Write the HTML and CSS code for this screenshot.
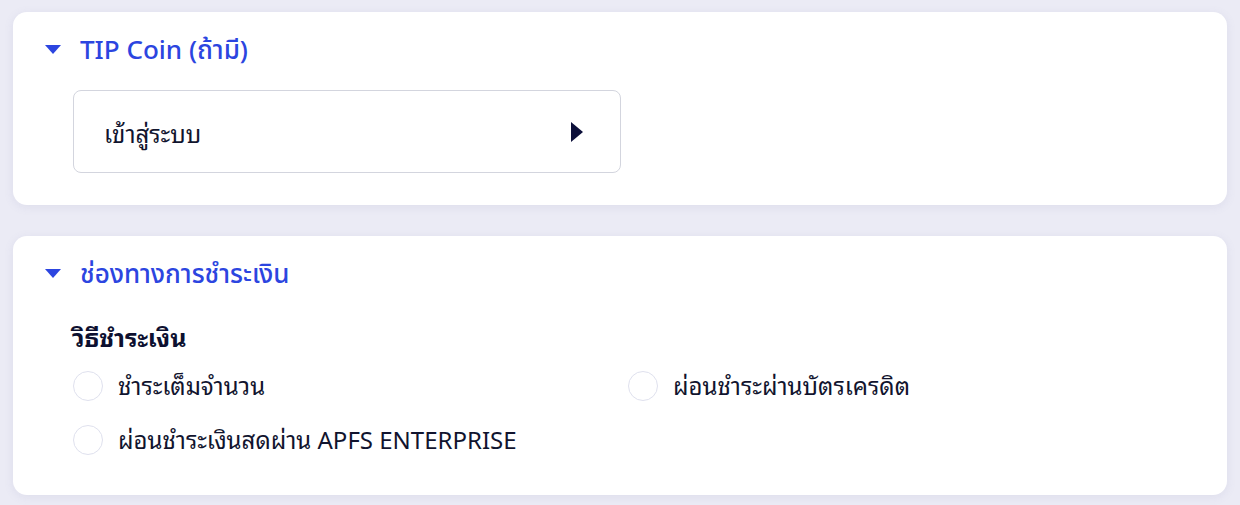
FILE: index.html
```html
<!DOCTYPE html>
<html lang="th">
<head>
<meta charset="utf-8">
<link rel="stylesheet" href="styles.css">
</head>
<body>
<main class="page">
  <section class="card card-coin">
    <header class="card-head">
      <span class="caret"></span>
      <h2 class="card-title">TIP Coin (ถ้ามี)</h2>
    </header>
    <div class="card-body">
      <button class="login-box" type="button">
        <span class="login-text">เข้าสู่ระบบ</span>
        <span class="play"></span>
      </button>
    </div>
  </section>

  <section class="card card-pay">
    <header class="card-head">
      <span class="caret"></span>
      <h2 class="card-title">ช่องทางการชำระเงิน</h2>
    </header>
    <div class="card-body pay-body">
      <h3 class="pay-label">วิธีชำระเงิน</h3>
      <div class="options">
        <label class="option"><span class="radio"></span><span class="opt-text">ชำระเต็มจำนวน</span></label>
        <label class="option"><span class="radio"></span><span class="opt-text">ผ่อนชำระผ่านบัตรเครดิต</span></label>
        <label class="option"><span class="radio"></span><span class="opt-text">ผ่อนชำระเงินสดผ่าน APFS ENTERPRISE</span></label>
      </div>
    </div>
  </section>
</main>
</body>
</html>
```

FILE: styles.css
```css
* { box-sizing: border-box; }
html, body { margin: 0; padding: 0; }
body {
  background: #ebebf5;
  font-family: "Noto Sans", "Noto Sans Thai Looped", "Noto Sans Thai", sans-serif;
  color: #11142e;
  width: 1240px;
  height: 505px;
  overflow: hidden;
}
.page {
  padding: 12px 13px 0 13px;
  display: flex;
  flex-direction: column;
  gap: 31px;
}
.card {
  background: #ffffff;
  border-radius: 14px;
  box-shadow: 0 2px 10px rgba(120, 120, 170, 0.12);
}
.card-coin { height: 193px; }
.card-pay { height: 259px; }
.card-head {
  display: flex;
  align-items: center;
  height: 74px;
  padding-left: 32px;
  gap: 19px;
}
.caret {
  width: 0; height: 0;
  border-left: 8.5px solid transparent;
  border-right: 8.5px solid transparent;
  border-top: 9px solid #2c45e0;
}
.card-title {
  margin: 0;
  font-family: "Noto Sans", "Noto Sans Thai", sans-serif;
  font-size: 26px;
  font-weight: 500;
  color: #2c45e0;
  line-height: 34px;
}
.card-body { padding-left: 60px; padding-right: 44px; }
.login-box {
  display: flex;
  align-items: center;
  justify-content: space-between;
  width: 548px;
  height: 83px;
  margin-top: 4px;
  padding: 0 37px 0 30px;
  background: #fff;
  border: 1px solid #d3d5de;
  border-radius: 8px;
  font: inherit;
  color: inherit;
  cursor: pointer;
}
.login-text { font-size: 24px; }
.play {
  width: 0; height: 0;
  border-top: 10.5px solid transparent;
  border-bottom: 10.5px solid transparent;
  border-left: 12px solid #0c0f3a;
}
.pay-body { padding-left: 59px; }
.pay-label {
  margin: 12px 0 0 0;
  font-size: 25px;
  font-weight: 700;
  color: #0d1030;
  line-height: 30px;
}
.options {
  display: grid;
  grid-template-columns: 555px 1fr;
  row-gap: 24px;
  margin-top: 19px;
}
.option {
  display: flex;
  align-items: center;
  gap: 15px;
  font-size: 24px;
  line-height: 30px;
  padding-left: 1px;
}
.radio {
  width: 30px; height: 30px;
  border-radius: 50%;
  border: 1px solid #dfe1ee;
  background: #fff;
  flex: none;
}
```
